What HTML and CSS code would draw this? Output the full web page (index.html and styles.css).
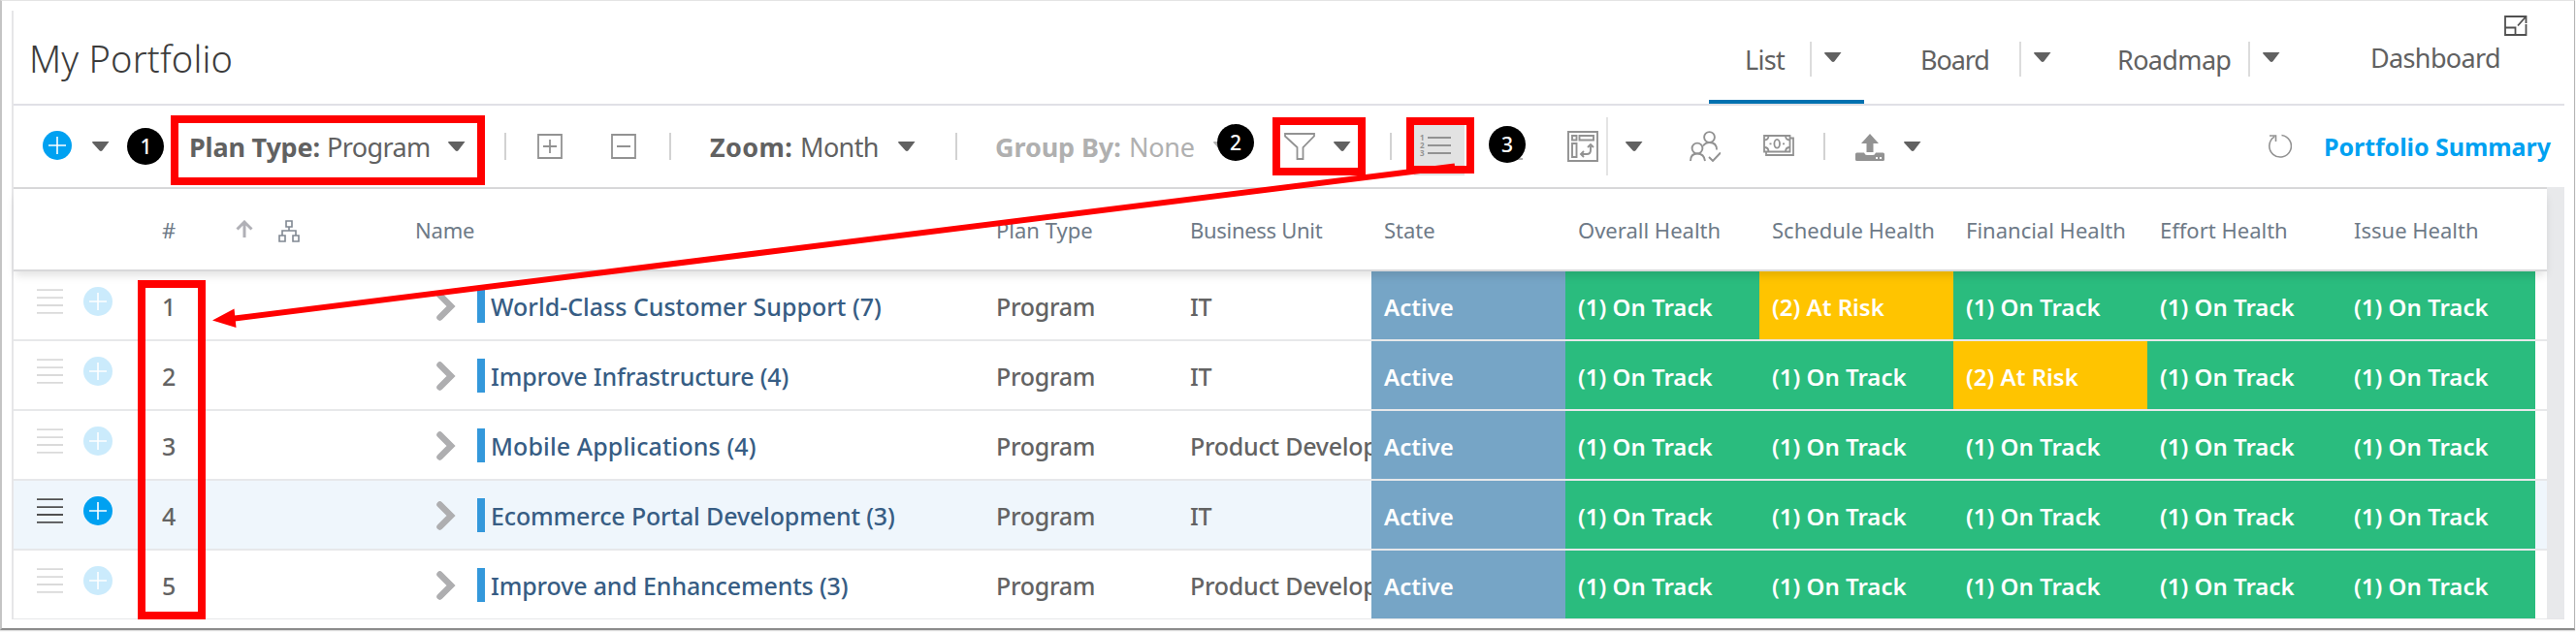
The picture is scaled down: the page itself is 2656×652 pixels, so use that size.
FILE: index.html
```
<!DOCTYPE html>
<html lang="en">
<head>
<meta charset="utf-8">
<title>My Portfolio</title>
<link rel="stylesheet" href="styles.css">
</head>
<body>
<svg class="defs" aria-hidden="true">
  <symbol id="plus" viewBox="0 0 30 30"><circle cx="15" cy="15" r="15" fill="#00a1f1"/><path d="M6 15h18M15 6v18" stroke="#fff" stroke-width="1.6"/></symbol>
  <symbol id="caret" viewBox="0 0 18 10"><path d="M.5 0h17L10.500 9.300q-1.500 1.400-3 0L0 1z" fill="currentColor"/></symbol>
  <symbol id="bars" viewBox="0 0 27 26"><path d="M0 1.200h27M0 9.100h27M0 17h27M0 24.800h27" stroke="currentColor" stroke-width="1.800"/></symbol>
  <symbol id="chev" viewBox="0 0 20 30"><path d="M3.500 3.500L15 15 3.500 26.500" fill="none" stroke="#aeaeb0" stroke-width="6.500" stroke-linecap="round"/></symbol>
</svg>
<div class="page">
  <main class="panel">
    <header class="header">
      <h1>My Portfolio</h1>
      <nav class="tabs">
        <div class="tab active"><span>List</span><i></i><svg class="caret"><use href="#caret"/></svg></div>
        <div class="tab board"><span>Board</span><i></i><svg class="caret"><use href="#caret"/></svg></div>
        <div class="tab roadmap"><span>Roadmap</span><i></i><svg class="caret"><use href="#caret"/></svg></div>
        <div class="tab dashboard"><span>Dashboard</span></div>
      </nav>
      <svg class="expand" viewBox="0 0 24 21"><path d="M16 1H1v19h21.500V9M1 12.500h10.500V20M14 10.500L22 1.500M16 1h6.500v7" fill="none" stroke="#505050" stroke-width="1.800"/></svg>
    </header>

    <div class="toolbar">
      <svg class="add"><use href="#plus"/></svg>
      <svg class="caret"><use href="#caret"/></svg>
      <b class="plan">Plan Type:</b><span>Program</span>
      <svg class="caret"><use href="#caret"/></svg>
      <i></i>
      <svg class="box" viewBox="0 0 26 26"><path d="M1 1h24v24H1zM6 13h14M13 6v14" fill="none" stroke="#929292" stroke-width="1.800"/></svg>
      <svg class="box" viewBox="0 0 26 26"><path d="M1 1h24v24H1zM6 13h14" fill="none" stroke="#929292" stroke-width="1.800"/></svg>
      <i></i>
      <b class="zoom">Zoom:</b><span>Month</span>
      <svg class="caret"><use href="#caret"/></svg>
      <i></i>
      <b class="muted">Group By:</b><span class="muted">None</span>
      <svg class="caret muted"><use href="#caret"/></svg>
      <svg class="funnel" viewBox="0 0 32 28"><path d="M1 1h30v2.500L19.500 15v12h-6V15L1 3.500z" fill="none" stroke="#929292" stroke-width="1.800"/></svg>
      <svg class="caret"><use href="#caret"/></svg>
      <i></i>
      <button class="numbered"><svg viewBox="0 0 34 26"><path d="M8 4h24M8 12h24M8 20h24" stroke="#929292" stroke-width="1.800"/><text x="0" y="6.500">1</text><text x="0" y="14.500">2</text><text x="0" y="22.500">3</text></svg></button>
      <svg class="under" viewBox="0 0 30 28"><path d="M2 27h27" stroke="#b0b0b0" stroke-width="2"/></svg>
      <svg class="pivot" viewBox="0 0 32 32"><g fill="none" stroke="#929292" stroke-width="1.900"><path d="M1 1h30v30H1zM5 5h4.500v4.500H5zM12.500 5H27v4.500H12.500zM5 13h4.500v14H5z"/><path d="M14.500 24H20q4 0 4-4v-4.500"/><path d="M17 21l-3 3 3 3M21 17l3-3 3 3"/></g></svg>
      <i class="tall"></i>
      <svg class="caret"><use href="#caret"/></svg>
      <svg class="people" viewBox="0 0 32 32"><g fill="none" stroke="#929292" stroke-width="1.900"><circle cx="20.500" cy="6.500" r="5.400"/><circle cx="8" cy="18" r="5.400"/><path d="M1 31q0-7.500 7-7.500t8 7.500M14 15.500q2.500-3.500 6.500-3.500 7.500 0 7.500 7.500M20 27l4 4 8-8.500"/></g></svg>
      <svg class="money" viewBox="0 0 32 22"><g fill="none" stroke="#929292" stroke-width="1.800"><path d="M1 1h26.500v16.500H1zM27.500 3.500H31V21H3v-3.500"/><ellipse cx="14.200" cy="9.300" rx="2.800" ry="4.400"/><path d="M1 5.500q4.500 0 4.500-4.500M23 1q0 4.500 4.500 4.500M1 13q4.500 0 4.500 4.500M23 17.500q0-4.500 4.500-4.500M6.500 9.300h2M20 9.300h2"/></g></svg>
      <i></i>
      <svg class="upload" viewBox="0 0 30 28"><path fill="#929292" fill-rule="evenodd" d="M15 0l9 10h-5.500v9h-7v-9H6zM1.500 19.500H9q1 2.500 3 2.500h6q2 0 3-2.500h7.500q1.500 0 1.500 1.500v5.500q0 1.500-1.500 1.500h-27Q0 28 0 26.500V21q0-1.500 1.500-1.500zM21 24v2h2v-2zM25 24v2h2v-2z"/></svg>
      <svg class="caret"><use href="#caret"/></svg>
      <svg class="refresh" viewBox="0 0 26 26"><path d="M15.500 1.500A11.300 11.300 0 1 1 8 3.200M3 2h6.500v6" fill="none" stroke="#929292" stroke-width="1.600"/></svg>
      <a class="summary">Portfolio Summary</a>
    </div>

    <div class="body">
      <section class="table">
        <div class="thead">
          <span>#</span>
          <svg class="sort" viewBox="0 0 18 18"><path d="M9 18V2M1.500 9.500L9 2l7.500 7.500" fill="none" stroke="#b0b0b6" stroke-width="3"/></svg>
          <svg class="tree" viewBox="0 0 22 23"><path d="M8 1h6v6H8zM1 16h6v6H1zM15 16h6v6h-6zM11 7v4M4 16v-5h14v5" fill="none" stroke="#808892" stroke-width="1.600"/></svg>
          <span class="n">Name</span><span>Plan Type</span><span class="w">Business Unit</span><span>State</span><span>Overall Health</span><span>Schedule Health</span><span>Financial Health</span><span>Effort Health</span><span>Issue Health</span>
        </div>
        <div class="row"><svg class="bars"><use href="#bars"/></svg><svg class="dot"><use href="#plus"/></svg><span>1</span><svg class="chev"><use href="#chev"/></svg><em></em><span class="name">World-Class Customer Support (7)</span><span class="p">Program</span><span class="unit">IT</span><b class="state">Active</b><b>(1) On Track</b><b class="risk">(2) At Risk</b><b>(1) On Track</b><b>(1) On Track</b><b>(1) On Track</b></div>
        <div class="row"><svg class="bars"><use href="#bars"/></svg><svg class="dot"><use href="#plus"/></svg><span>2</span><svg class="chev"><use href="#chev"/></svg><em></em><span class="name tight">Improve Infrastructure (4)</span><span class="p">Program</span><span class="unit">IT</span><b class="state">Active</b><b>(1) On Track</b><b>(1) On Track</b><b class="risk">(2) At Risk</b><b>(1) On Track</b><b>(1) On Track</b></div>
        <div class="row"><svg class="bars"><use href="#bars"/></svg><svg class="dot"><use href="#plus"/></svg><span>3</span><svg class="chev"><use href="#chev"/></svg><em></em><span class="name loose">Mobile Applications (4)</span><span class="p">Program</span><span class="unit">Product Development</span><b class="state">Active</b><b>(1) On Track</b><b>(1) On Track</b><b>(1) On Track</b><b>(1) On Track</b><b>(1) On Track</b></div>
        <div class="row hover"><svg class="bars"><use href="#bars"/></svg><svg class="dot"><use href="#plus"/></svg><span>4</span><svg class="chev"><use href="#chev"/></svg><em></em><span class="name tight">Ecommerce Portal Development (3)</span><span class="p">Program</span><span class="unit">IT</span><b class="state">Active</b><b>(1) On Track</b><b>(1) On Track</b><b>(1) On Track</b><b>(1) On Track</b><b>(1) On Track</b></div>
        <div class="row"><svg class="bars"><use href="#bars"/></svg><svg class="dot"><use href="#plus"/></svg><span>5</span><svg class="chev"><use href="#chev"/></svg><em></em><span class="name tight">Improve and Enhancements (3)</span><span class="p">Program</span><span class="unit">Product Development</span><b class="state">Active</b><b>(1) On Track</b><b>(1) On Track</b><b>(1) On Track</b><b>(1) On Track</b><b>(1) On Track</b></div>
      </section>
      <div class="scroll"></div>
    </div>
  </main>
</div>

<!-- callouts drawn over the page -->
<svg class="callouts" viewBox="0 0 2656 652">
  <g fill="none" stroke="#f00" stroke-width="8">
    <rect x="180" y="123" width="316" height="64"/>
    <rect x="1316" y="125" width="88" height="52"/>
    <rect x="1454" y="125" width="62" height="50"/>
    <rect x="146" y="293" width="62" height="342"/>
    <path d="M1500 171.500L240 328.800" stroke-width="6"/>
  </g>
  <path d="M219 330.500L241.500 318.500L243.500 338z" fill="#f00"/>
  <g class="badges">
    <circle cx="150" cy="151" r="19"/><text x="150.500" y="158.500">1</text>
    <circle cx="1274" cy="147" r="19"/><text x="1274" y="154.500">2</text>
    <circle cx="1554" cy="149" r="19"/><text x="1554" y="156.500">3</text>
  </g>
</svg>
</body>
</html>
```
FILE: styles.css
```
* { box-sizing: border-box; }
body { margin: 0; width: 2656px; height: 652px; overflow: hidden; background: #fff; font-family: "Noto Sans", "Open Sans", sans-serif; color: #616161; }
svg { display: block; }
i { font-style: normal; }
.defs { position: absolute; width: 0; height: 0; }

.page { width: 2655px; height: 650px; border: solid; border-width: 1px 1px 2px 2px; border-color: #e4e4e4 #b4b4b4 #8c8c8c #c4c4c4; padding: 10px 9px 10px 10px; box-shadow: 0 1px 1px #ddd; }
.panel { width: 2632px; height: 628px; border-left: 2px solid #e6e6e8; border-bottom: 1px solid #e6e6e8; }

.header { display: flex; justify-content: space-between; height: 98px; border-bottom: 2px solid #e0e0e6; }
h1 { margin: 0 0 0 16px; font-size: 38px; font-weight: 300; line-height: 99px; letter-spacing: .2px; color: #3c3c3c; }
.tabs { display: flex; width: 882px; height: 96px; font-size: 27px; letter-spacing: -.65px; }
.tab { display: flex; align-items: center; padding-top: 4px; }
.tab span { flex: none; padding-left: 1px; }
.tab i { flex: none; width: 2px; height: 36px; background: #dcdcdc; margin-right: 13px; }
.tab .caret { margin-top: -4px; }
.active { width: 160px; padding-left: 36px; box-shadow: inset 0 -4px #0071b0; }
.active span { width: 68px; }
.board { margin-left: 57px; }
.board span { width: 103px; letter-spacing: -1.1px; }
.roadmap { margin-left: 67px; }
.roadmap span { width: 136px; }
.dashboard { margin-left: 92px; padding-top: 0; }
.caret { flex: none; width: 18px; height: 10px; }
.expand { position: absolute; left: 2582px; top: 16px; width: 24px; height: 21px; }

.toolbar { display: grid; align-items: center; height: 86px; padding-left: 30px; border-bottom: 2px solid #d8d8da; font-size: 27px; letter-spacing: -.6px; white-space: nowrap;
  grid-template: 84px / 51px 99px 142px 126px 58px 34px 76px 60px 41px 93px 102px 59px 40px 138px 88px 73px 51px 58px 25px 83px 75px 40px 20px 66px 76px 62px 33px 50px 374px 59px 240px; }
.toolbar b, .toolbar span { padding-left: 1px; }
.toolbar i { width: 2px; height: 28px; background: #d2d2d2; }
.toolbar .tall { height: 60px; background: #e4e4e4; }
.add { width: 30px; height: 30px; margin-top: -2px; }
.plan { letter-spacing: -.2px; }
.zoom { letter-spacing: .4px; }
.muted { color: #b0b0b0; letter-spacing: -.1px; }
span.muted { letter-spacing: -.3px; }
.box { width: 26px; height: 26px; }
.funnel { width: 32px; height: 28px; }
.numbered { width: 52px; height: 60px; padding: 0 0 0 6px; border: 0; background: #e2e2e2; }
.numbered svg { width: 34px; height: 26px; margin-top: -1px; overflow: visible; }
.numbered text { font: 700 8px "Open Sans", sans-serif; fill: #929292; }
.under { width: 30px; height: 28px; }
.pivot, .people { width: 32px; height: 32px; }
.money { width: 32px; height: 22px; margin-top: -2px; }
.upload { width: 30px; height: 28px; margin-top: 2px; }
.refresh { width: 26px; height: 26px; }
.summary { font-size: 25px; font-weight: 700; letter-spacing: -.05px; color: #00a1f1; }

.body { display: flex; height: 444px; margin-top: -2px; padding-top: 2px; }
.table { width: 2612px; }
.scroll { width: 18px; height: 445px; margin-top: -2px; background: #e8e9eb; }
.thead { position: relative; z-index: 1; display: grid; align-items: center; height: 85px; padding-left: 152px; border-bottom: 2px solid #d8d8da; background: #fff; box-shadow: 0 6px 9px -2px rgba(0,0,0,.12); font-size: 22px; color: #6e7a87; white-space: nowrap;
  grid-template: 83px / 77px 44px 140px 599px 200px 200px repeat(6, 200px); }
.thead span { padding: 1px 0 0 1px; }
.thead .w { letter-spacing: -.3px; }
.thead .n { letter-spacing: -.2px; }
.sort { width: 18px; height: 18px; margin-top: -2px; }
.tree { width: 22px; height: 23px; margin-top: 4px; }
.row { display: grid; align-items: center; height: 72px; padding-left: 24px; border-bottom: 2px solid #e7e8ea; font-size: 25px; font-weight: 500; color: #636363; white-space: nowrap;
  grid-template: 70px / 48px 81px 283px 42px 13px 521px 200px 188px repeat(6, 200px); }
.row:last-child { height: 71px; border-bottom: 1px solid #e7e8ea; }
.row span { padding-top: 2px; }
.bars { width: 27px; height: 26px; margin-top: -8px; color: #dadada; }
.dot { width: 30px; height: 30px; margin-top: -9px; opacity: .2; }
.chev { width: 20px; height: 30px; margin-top: 2px; }
.row em { width: 8px; height: 35px; margin-top: 1px; background: #3498db; }
.row .name, .row .p, .row .unit { padding-left: 1px; }
.name { color: #375d84; }
.tight { letter-spacing: -.15px; }
.loose { letter-spacing: .1px; }
.p { letter-spacing: -.3px; }
.unit { overflow: hidden; letter-spacing: -.25px; }
.row b { height: 70px; padding: 2px 0 0 13px; line-height: 69px; font-size: 24px; font-weight: 600; color: #fff; background: #2abc7e; }
.row .state { background: #76a5c6; }
.row .risk { background: #ffc400; }
.hover { background: #eff6fc; }
.hover .bars { color: #505050; }
.hover .dot { opacity: 1; }

.callouts { position: absolute; z-index: 2; left: 0; top: 0; width: 2656px; height: 652px; }
.badges text { fill: #fff; font: 500 21px "Noto Sans", sans-serif; text-anchor: middle; }
```
